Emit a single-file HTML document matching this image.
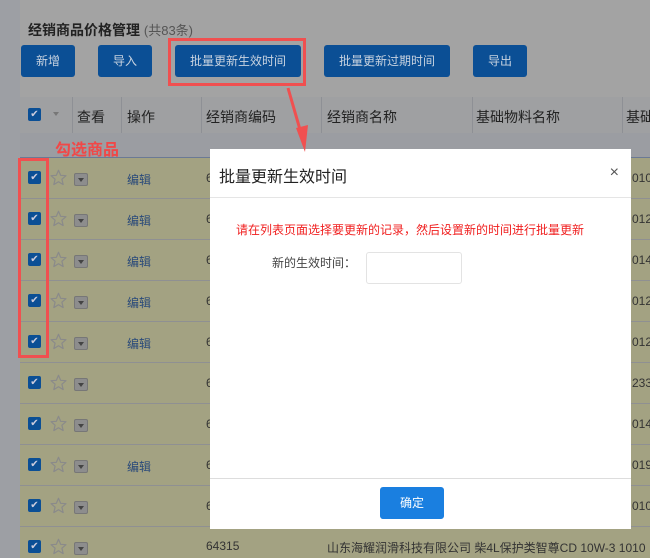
<!DOCTYPE html>
<html><head><meta charset="utf-8"><style>
*{box-sizing:border-box;margin:0;padding:0}
html{width:650px;height:558px;overflow:hidden}
body{width:650px;height:558px;overflow:hidden;position:relative;background:#a3a3a3;font-family:"Liberation Sans","Noto Sans CJK SC",sans-serif;font-size:13px;color:#333}
.abs{position:absolute}
.strip{left:0;top:0;width:20px;height:558px;background:#9d9fa4}
.title{left:28px;top:20px;font-size:14px;font-weight:bold;color:#222}
.title span{font-weight:normal;color:#555;font-size:13px}
.btn{position:absolute;top:45px;height:32px;background:#0b4f95;color:#c8d3e0;border-radius:3px;font-size:12px;line-height:32px;text-align:center}
.hdr{left:20px;top:97px;width:630px;height:36px;background:#9fa0a2;overflow:hidden}
.filt{left:20px;top:133px;width:630px;height:25px;background:#9b9da2;border-bottom:1px solid #6b7a95}
.row{position:absolute;left:20px;width:630px;height:41px;background:#a3a282;border-bottom:1px solid #8f9092;overflow:hidden}
.cb{position:absolute;left:8px;top:13px;width:13px;height:13px;background:#0b4f95;border-radius:2px;color:#ccd;font-size:10px;line-height:13px;text-align:center}
.star{position:absolute;left:30px;top:11px;width:17px;height:17px}
.dd{position:absolute;left:54px;top:15px;width:14px;height:13px;background:#8d8d8d;border:1px solid #777;border-radius:2px}
.dd:after{content:"";position:absolute;left:3px;top:4px;border:3px solid transparent;border-top:4px solid #444}
.ed{position:absolute;left:107px;top:13px;color:#2a4a7a;font-size:12px}
.code{position:absolute;left:186px;top:13px;color:#333;font-size:12px}
.r{position:absolute;left:612px;top:13px;font-size:12px;color:#333}
.hd{position:absolute;top:10px;font-size:14px;color:#222;white-space:nowrap}
.vl{position:absolute;top:0;width:1px;height:36px;background:#8e9095}
.modal{left:210px;top:149px;width:421px;height:380px;background:#fff}
</style></head><body>
<svg width="0" height="0" style="position:absolute"><defs><symbol id="st" viewBox="0 0 20 20"><polygon points="10,1.5 12.5,7.4 18.8,7.9 14,12 15.5,18.3 10,15 4.5,18.3 6,12 1.2,7.9 7.5,7.4" fill="none" stroke="#8a8a8a" stroke-width="1.4" stroke-linejoin="round"/></symbol></defs></svg>
<div class="abs strip"></div>
<div class="abs title">经销商品价格管理 <span>(共83条)</span></div>
<div class="btn" style="left:21px;width:54px">新增</div>
<div class="btn" style="left:98px;width:54px">导入</div>
<div class="btn" style="left:175px;width:126px">批量更新生效时间</div>
<div class="btn" style="left:324px;width:126px">批量更新过期时间</div>
<div class="btn" style="left:473px;width:54px">导出</div>
<div class="abs" style="left:168px;top:38px;width:138px;height:48px;border:3px solid #f05050"></div>

<div class="abs hdr">
<div class="cb" style="top:11px">✔</div>
<div style="position:absolute;left:33px;top:15px;border:3px solid transparent;border-top:4px solid #777"></div>
<div class="vl" style="left:52px"></div><div class="vl" style="left:101px"></div><div class="vl" style="left:181px"></div><div class="vl" style="left:301px"></div><div class="vl" style="left:452px"></div><div class="vl" style="left:602px"></div>
<div class="hd" style="left:57px">查看</div><div class="hd" style="left:107px">操作</div><div class="hd" style="left:186px">经销商编码</div><div class="hd" style="left:307px">经销商名称</div><div class="hd" style="left:456px">基础物料名称</div><div class="hd" style="left:606px">基础</div>
</div>
<div class="abs filt"></div>
<div class="abs" style="left:55px;top:136px;color:#f04848;font-size:16px;font-weight:bold">勾选商品</div>

<div class="row" style="top:158px"><div class="cb">✔</div><svg class="star"><use href="#st"/></svg><div class="dd"></div><div class="ed">编辑</div><div class="code">6</div><div class="r">010</div></div>
<div class="row" style="top:199px"><div class="cb">✔</div><svg class="star"><use href="#st"/></svg><div class="dd"></div><div class="ed">编辑</div><div class="code">6</div><div class="r">012</div></div>
<div class="row" style="top:240px"><div class="cb">✔</div><svg class="star"><use href="#st"/></svg><div class="dd"></div><div class="ed">编辑</div><div class="code">6</div><div class="r">014</div></div>
<div class="row" style="top:281px"><div class="cb">✔</div><svg class="star"><use href="#st"/></svg><div class="dd"></div><div class="ed">编辑</div><div class="code">6</div><div class="r">012</div></div>
<div class="row" style="top:322px"><div class="cb">✔</div><svg class="star"><use href="#st"/></svg><div class="dd"></div><div class="ed">编辑</div><div class="code">6</div><div class="r">012</div></div>
<div class="row" style="top:363px"><div class="cb">✔</div><svg class="star"><use href="#st"/></svg><div class="dd"></div><div class="code">6</div><div class="r">233</div></div>
<div class="row" style="top:404px"><div class="cb">✔</div><svg class="star"><use href="#st"/></svg><div class="dd"></div><div class="code">6</div><div class="r">014</div></div>
<div class="row" style="top:445px"><div class="cb">✔</div><svg class="star"><use href="#st"/></svg><div class="dd"></div><div class="ed">编辑</div><div class="code">6</div><div class="r">019</div></div>
<div class="row" style="top:486px"><div class="cb">✔</div><svg class="star"><use href="#st"/></svg><div class="dd"></div><div class="code">6</div><div class="r">010</div></div>
<div class="row" style="top:527px"><div class="cb">✔</div><svg class="star"><use href="#st"/></svg><div class="dd"></div><div class="code" style="top:12px">64315</div><div style="position:absolute;left:307px;top:12px;font-size:12px;white-space:nowrap">山东海耀润滑科技有限公司 柴4L保护类智尊CD 10W-3 1010</div></div>

<div class="abs" style="left:18px;top:158px;width:31px;height:200px;border:3px solid #f05050"></div>

<div class="abs modal">
<div style="position:absolute;left:9px;top:14px;font-size:16px;color:#222">批量更新生效时间</div>
<div style="position:absolute;right:12px;top:15px;font-size:16px;color:#555">×</div>
<div style="position:absolute;left:0;top:48px;width:421px;height:1px;background:#e5e5e5"></div>
<div style="position:absolute;left:26px;top:72px;font-size:12px;color:#f02020">请在列表页面选择要更新的记录，然后设置新的时间进行批量更新</div>
<div style="position:absolute;left:62px;top:105px;font-size:12px;color:#444">新的生效时间：</div>
<div style="position:absolute;left:156px;top:103px;width:96px;height:32px;border:1px solid #e3e3e3;border-radius:3px"></div>
<div style="position:absolute;left:0;top:329px;width:421px;height:1px;background:#ddd"></div>
<div style="position:absolute;left:170px;top:338px;width:64px;height:32px;background:#1a7fe0;border-radius:3px;color:#fff;font-size:12px;text-align:center;line-height:32px">确定</div>
</div>
<svg class="abs" style="left:0;top:0" width="650" height="558"><line x1="288" y1="88" x2="303" y2="140" stroke="#f05050" stroke-width="3"/><polygon points="296,128 308,125 305,152" fill="#f05050"/></svg>
</body></html>
